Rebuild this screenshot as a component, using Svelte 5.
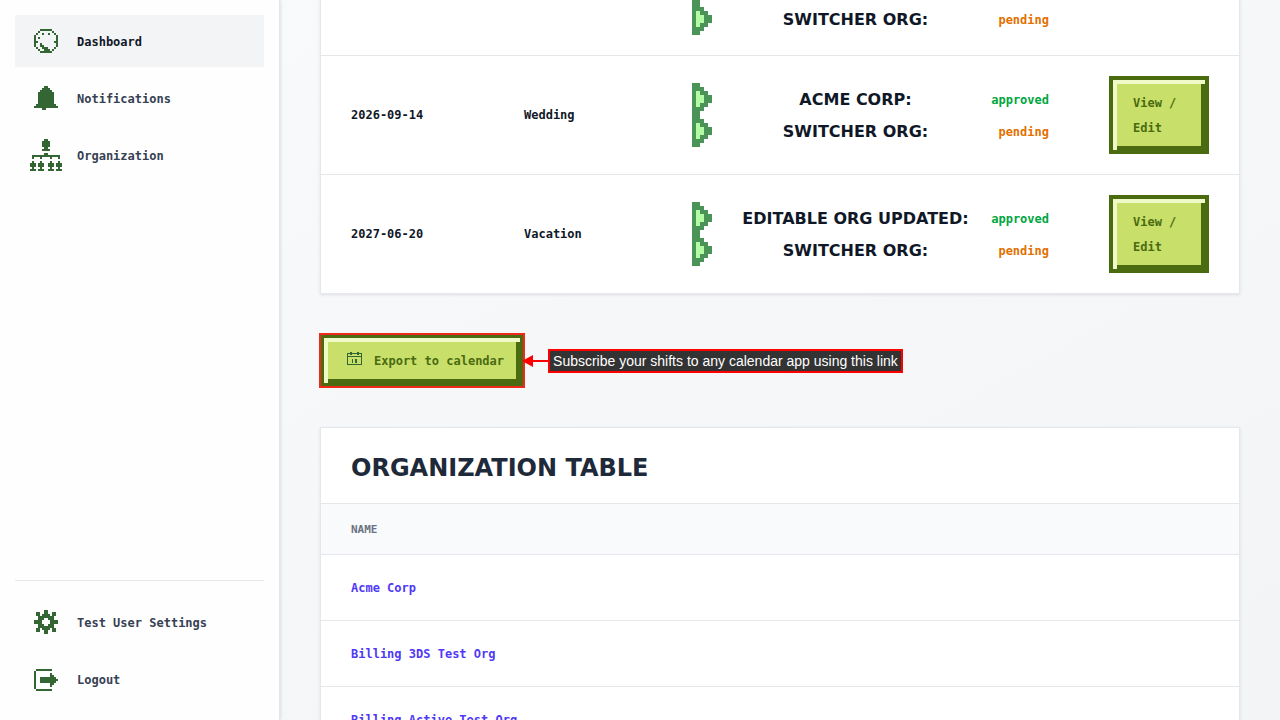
<script lang="ts">
  type Org = { name: string; status: string }
  type Shift = { date: string; type: string; orgs: Org[] }

  const icons: Record<string, string[]> = {
    dashboard: [
      '',
      '',
      '.....######',
      '....#......#',
      '...#..#..#..#',
      '..#..........#',
      '..#.#........#',
      '..#..........#',
      '..##........##',
      '..#..#.......#',
      '..#..##......#',
      '...#..###...#',
      '....#..###.#',
      '.....######'
    ],
    bell: [
      '',
      '',
      '.......##',
      '......####',
      '.....######',
      '....########',
      '....########',
      '....########',
      '....########',
      '....########',
      '....########',
      '...##########',
      '..############',
      '......##'
    ],
    organization: [
      '.......##',
      '......####',
      '......####',
      '......####',
      '.......##',
      '......####',
      '',
      '.......##',
      '.##############',
      '.#...#....#...#',
      '',
      '.#...#....#...#',
      '###.###..###.###',
      '###.###..###.###',
      '.#...#....#...#',
      '###.###..###.###'
    ],
    settings: [
      '',
      '',
      '.......##',
      '...##..##..##',
      '...##.####.##',
      '....########',
      '....###..###',
      '..####....####',
      '..####....####',
      '....###..###',
      '....########',
      '...##.####.##',
      '...##..##..##',
      '.......##'
    ],
    logout: [
      '',
      '',
      '',
      '...########',
      '..#',
      '..#.......#',
      '..#.......##',
      '..#..########',
      '..#..#########',
      '..#..########',
      '..#.......##',
      '..#.......#',
      '..#',
      '...########'
    ]
  }

  const spike = ['##', '###', '#.##', '#..##', '#..##', '#.##', '###', '##']

  const calendar = [
    '...##.....##',
    '###############',
    '#..##.....##..#',
    '#.............#',
    '###############',
    '#.............#',
    '#.............#',
    '#....#..##....#',
    '#....#..##....#',
    '#....#..##....#',
    '#....#..##....#',
    '#.............#',
    '###############'
  ]

  const links = [
    { label: 'Dashboard', icon: 'dashboard', active: true },
    { label: 'Notifications', icon: 'bell', active: false },
    { label: 'Organization', icon: 'organization', active: false }
  ]

  const userLinks = [
    { label: 'Test User Settings', icon: 'settings', active: false },
    { label: 'Logout', icon: 'logout', active: false }
  ]

  const shifts: Shift[] = [
    {
      date: '',
      type: '',
      orgs: [
        { name: '', status: '' },
        { name: 'Switcher Org', status: 'pending' }
      ]
    },
    {
      date: '2026-09-14',
      type: 'Wedding',
      orgs: [
        { name: 'Acme Corp', status: 'approved' },
        { name: 'Switcher Org', status: 'pending' }
      ]
    },
    {
      date: '2027-06-20',
      type: 'Vacation',
      orgs: [
        { name: 'Editable Org Updated', status: 'approved' },
        { name: 'Switcher Org', status: 'pending' }
      ]
    }
  ]

  const organizations = ['Acme Corp', 'Billing 3DS Test Org', 'Billing Active Test Org']

  // one h-run per block of # characters
  function toPath(rows: string[]) {
    return rows
      .map((row, y) =>
        [...row.matchAll(/#+/g)].map(m => `M${m.index} ${y}h${m[0].length}v1h-${m[0].length}z`).join('')
      )
      .join('')
  }
</script>

{#snippet navLink(link)}
  <a href="#{link.icon}" class="link" class:active={link.active}>
    <svg class="icon" viewBox="0 0 16 16" aria-hidden="true">
      <path d={toPath(icons[link.icon])} />
    </svg>
    <span>{link.label}</span>
  </a>
{/snippet}

<div class="layout">
  <aside>
    <nav>
      {#each links as link}
        {@render navLink(link)}
      {/each}
    </nav>
    <nav class="user">
      {#each userLinks as link}
        {@render navLink(link)}
      {/each}
    </nav>
  </aside>

  <main>
    <section class="card shifts">
      <table>
        <colgroup>
          <col class="date" />
          <col class="type" />
          <col />
          <col class="action" />
        </colgroup>
        <tbody>
          {#each shifts as shift}
            <tr>
              <td>{shift.date}</td>
              <td>{shift.type}</td>
              <td>
                <ul>
                  {#each shift.orgs as org}
                    <li>
                      <svg class="spike" viewBox="0 0 5 8" aria-hidden="true">
                        <path class="spike-fill" d="M1 2h1v1h1v2h-1v1h-1z" />
                        <path d={toPath(spike)} />
                      </svg>
                      {#if org.name}
                        <span class="org">{org.name}:</span>
                        <span class={org.status}>{org.status}</span>
                      {/if}
                    </li>
                  {/each}
                </ul>
              </td>
              <td>
                {#if shift.date}
                  <button>View / Edit</button>
                {/if}
              </td>
            </tr>
          {/each}
        </tbody>
      </table>
    </section>

    <div class="export">
      <button class="highlighted">
        <svg class="calendar" viewBox="-3 -3 20 20" aria-hidden="true">
          <path d={toPath(calendar)} />
        </svg>
        Export to calendar
      </button>
      <svg class="arrow" viewBox="0 0 24 12" aria-hidden="true">
        <path d="M-2 6L9 0V5H24V7H9V12Z" />
      </svg>
      <p class="hint">Subscribe your shifts to any calendar app using this link</p>
    </div>

    <section class="card organizations">
      <h2>Organization Table</h2>
      <table>
        <thead>
          <tr><th scope="col">Name</th></tr>
        </thead>
        <tbody>
          {#each organizations as organization}
            <tr>
              <td><a href="#organization">{organization}</a></td>
            </tr>
          {/each}
        </tbody>
      </table>
    </section>
  </main>
</div>

<style>
  :global(body) {
    margin: 0;
    overflow: hidden;
  }

  .layout {
    display: flex;
    height: 100vh;
    overflow: hidden;
    background: linear-gradient(to bottom right, #f9fafb, #f3f4f6);
    color: #101828;
    font: bold 12px/25px 'DejaVu Sans Mono', monospace;
  }

  aside {
    box-sizing: border-box;
    display: flex;
    flex-direction: column;
    justify-content: space-between;
    flex: 0 0 280px;
    padding: 15px;
    background: #fefefe;
    border-right: 1px solid #e5e7eb;
    box-shadow: 1px 0 3px rgba(0, 0, 0, 0.1);
  }

  nav {
    display: flex;
    flex-direction: column;
    gap: 5px;
  }

  .user {
    padding-top: 15px;
    border-top: 1px solid #e5e7eb;
  }

  .link {
    display: flex;
    align-items: center;
    gap: 15px;
    height: 52px;
    padding: 0 15px;
    color: #364153;
    text-decoration: none;
  }

  .link.active {
    background: #f3f4f6;
    color: #101828;
  }

  .link span {
    padding-top: 3px;
  }

  .icon {
    width: 32px;
    height: 32px;
    fill: #336633;
    shape-rendering: crispEdges;
  }

  main {
    flex: 1;
    min-width: 0;
    padding: 0 40px;
  }

  .card {
    background: #fff;
    border: 1px solid #e5e7eb;
    box-shadow: 0 1px 3px rgba(0, 0, 0, 0.1);
  }

  .shifts {
    margin-top: -50px;
  }

  table {
    width: 100%;
    table-layout: fixed;
    border-spacing: 0;
  }

  .date {
    width: 173px;
  }

  .type {
    width: 168px;
  }

  .action {
    width: 160px;
  }

  td,
  th {
    padding: 20px 30px;
    text-align: left;
  }

  td {
    border-bottom: 1px solid #e5e7eb;
  }

  tr:last-child td {
    border-bottom: none;
  }

  .organizations td {
    padding: 21px 30px 19px;
  }

  ul {
    margin: 0;
    padding: 0;
    list-style: none;
  }

  li {
    display: grid;
    grid-template-columns: 20px 1fr 58px;
    align-items: center;
    height: 32px;
    white-space: nowrap;
  }

  .spike {
    width: 20px;
    height: 32px;
    fill: #4a9457;
    shape-rendering: crispEdges;
  }

  .spike-fill {
    fill: #b4fca4;
  }

  .org {
    padding-left: 8px;
    font: bold 16px/25px 'DejaVu Sans', sans-serif;
    text-align: center;
    text-transform: uppercase;
  }

  .approved,
  .pending {
    padding-top: 2px;
    text-align: right;
  }

  .approved {
    color: #00a63e;
  }

  .pending {
    color: #e17100;
  }

  button {
    display: block;
    padding: 11px 20px 9px;
    background: #c8df6a;
    border: 4px solid #4a6b10;
    border-radius: 0;
    box-shadow: inset 4px 4px 0 #effac8, inset -4px -4px 0 #4a6b10;
    color: #4a6b10;
    font: inherit;
    text-align: left;
    cursor: pointer;
  }

  .export {
    display: flex;
    align-items: center;
    height: 53px;
    margin: 40px 0;
  }

  .highlighted {
    display: flex;
    align-items: center;
    gap: 10px;
    padding-right: 16px;
    outline: 2px solid #ee2a1a;
    outline-offset: -1px;
  }

  .calendar {
    align-self: flex-start;
    width: 20px;
    height: 20px;
    fill: #336633;
    shape-rendering: crispEdges;
  }

  .arrow {
    width: 24px;
    height: 12px;
    overflow: visible;
    fill: #f00;
  }

  .hint {
    margin: 0;
    padding: 0 3px;
    background: #333;
    border: 2px solid #f00;
    color: #fff;
    font: 14px/20px 'Liberation Sans', Arial, sans-serif;
  }

  h2 {
    margin: 0;
    padding: 28px 30px 22px;
    border-bottom: 1px solid #e5e7eb;
    color: #1e2939;
    font: bold 24px/25px 'DejaVu Sans', sans-serif;
    text-transform: uppercase;
  }

  th {
    padding: 13px 30px 12px;
    background: #f9fafb;
    border-bottom: 1px solid #e5e7eb;
    color: #6a7282;
    font-size: 11px;
    text-transform: uppercase;
  }

  td a {
    color: #4f39f6;
    text-decoration: none;
  }
</style>
